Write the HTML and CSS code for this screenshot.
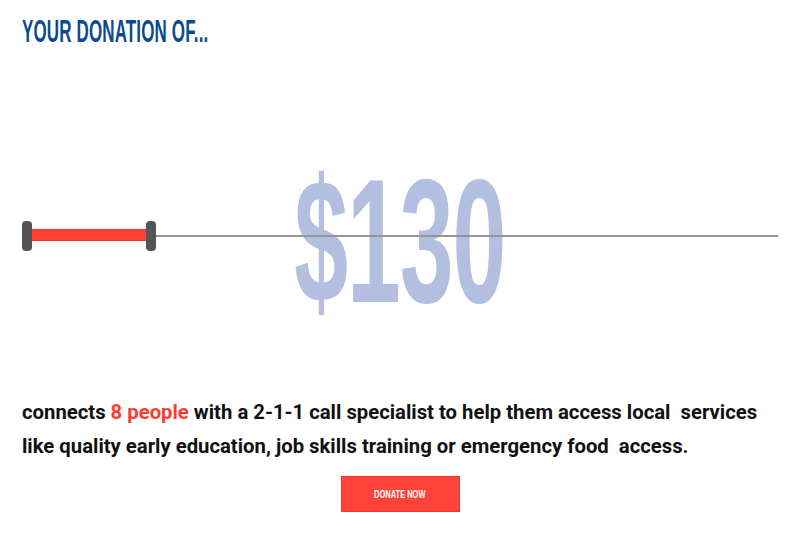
FILE: index.html
```html
<!DOCTYPE html>
<html>
<head>
<meta charset="utf-8">
<link rel="stylesheet" href="styles.css">
</head>
<body>
<div class="page">
  <h1 class="title"><span class="cond">YOUR DONATION OF...</span></h1>
  <div class="stage">
    <div class="amount"><span class="amount-text">$130</span></div>
    <div class="slider">
      <div class="rail"></div>
      <div class="fill" style="width:124px"></div>
      <div class="thumb thumb-start"></div>
      <div class="thumb thumb-end" style="left:124px"></div>
    </div>
  </div>
  <p class="impact">connects <span class="hl">8 people</span> with a 2-1-1 call specialist to help them access local&nbsp; services like quality early education, job skills training or emergency food&nbsp; access.</p>
  <div class="actions">
    <a class="donate" href="#"><span class="donate-text">DONATE NOW</span></a>
  </div>
</div>
</body>
</html>
```
FILE: styles.css
```css
html, body {
  margin: 0;
  padding: 0;
  background: #ffffff;
}
.page {
  width: 800px;
  height: 540px;
  padding: 15px 22px 0 22px;
  box-sizing: border-box;
  overflow: hidden;
}
.title {
  margin: 0;
  height: 32px;
  font-family: "Liberation Sans", Arial, sans-serif;
  font-weight: bold;
  font-size: 32px;
  line-height: 32px;
  color: #0b4a90;
  white-space: nowrap;
}
.cond {
  display: inline-block;
  transform: scaleX(0.53);
  transform-origin: 0 0;
  letter-spacing: 0.3px;
}
.stage {
  position: relative;
  height: 348px;
  margin-left: -22px;
  margin-right: -22px;
}
.amount {
  display: flex;
  justify-content: center;
  padding-top: 106px;
}
.amount-text {
  display: inline-block;
  font-family: "Liberation Sans", Arial, sans-serif;
  font-weight: bold;
  font-size: 176px;
  line-height: 176px;
  color: #b3bfe1;
  transform: scaleX(0.55);
  letter-spacing: -2px;
}
.slider {
  position: absolute;
  left: 22px;
  top: 174px;
  width: 756px;
  height: 30px;
}
.rail {
  position: absolute;
  left: 0;
  right: 0;
  top: 14px;
  height: 2px;
  background: #959595;
}
.fill {
  position: absolute;
  left: 5px;
  top: 8px;
  height: 12px;
  background: #ff4136;
  box-shadow: inset 0 0 0 1px #f2332a;
}
.thumb {
  position: absolute;
  top: 0;
  width: 10px;
  height: 30px;
  border-radius: 4px;
  background: #555555;
}
.thumb-start {
  left: 0;
}
.impact {
  margin: 0;
  font-family: Roboto, "Liberation Sans", sans-serif;
  font-weight: bold;
  font-size: 20.3px;
  line-height: 34px;
  color: #111111;
}
.hl {
  color: #ff3b30;
}
.actions {
  display: flex;
  justify-content: center;
  margin-top: 13px;
}
.donate {
  display: flex;
  align-items: center;
  justify-content: center;
  width: 119px;
  height: 36px;
  box-sizing: border-box;
  background: #ff433a;
  border: 1px solid #f5352d;
  text-decoration: none;
}
.donate-text {
  display: inline-block;
  font-family: "Liberation Sans", Arial, sans-serif;
  font-weight: bold;
  font-size: 11px;
  color: #ffffff;
  white-space: nowrap;
  transform: scaleX(0.68);
}
```
